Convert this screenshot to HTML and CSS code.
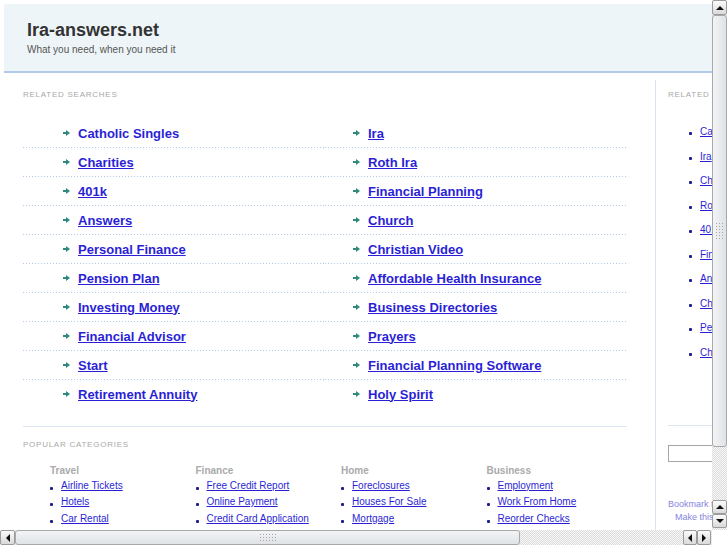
FILE: index.html
```html
<!DOCTYPE html>
<html lang="en">

<head>
    <meta charset="UTF-8">
    <meta name="viewport" content="width=device-width, initial-scale=1.0">
    <title>Ira-answers.net</title>
    <link rel="stylesheet" href="styles.css">
</head>

<body>

    <div class="page">
        <div class="header">
            <h1 class="site-name">Ira-answers.net</h1>
            <p class="tagline">What you need, when you need it</p>
        </div>

        <div class="main">
            <div class="content">
                <h3 class="section-title">Related Searches</h3>
                <div class="searches">
                    <ul class="search-list left">
                        <li><span class="arrow"></span><a href="#" class="hover">Catholic Singles</a></li>
                        <li><span class="arrow"></span><a href="#">Charities</a></li>
                        <li><span class="arrow"></span><a href="#">401k</a></li>
                        <li><span class="arrow"></span><a href="#">Answers</a></li>
                        <li><span class="arrow"></span><a href="#">Personal Finance</a></li>
                        <li><span class="arrow"></span><a href="#">Pension Plan</a></li>
                        <li><span class="arrow"></span><a href="#">Investing Money</a></li>
                        <li><span class="arrow"></span><a href="#">Financial Advisor</a></li>
                        <li><span class="arrow"></span><a href="#">Start</a></li>
                        <li><span class="arrow"></span><a href="#">Retirement Annuity</a></li>
                    </ul>
                    <ul class="search-list right">
                        <li><span class="arrow"></span><a href="#">Ira</a></li>
                        <li><span class="arrow"></span><a href="#">Roth Ira</a></li>
                        <li><span class="arrow"></span><a href="#">Financial Planning</a></li>
                        <li><span class="arrow"></span><a href="#">Church</a></li>
                        <li><span class="arrow"></span><a href="#">Christian Video</a></li>
                        <li><span class="arrow"></span><a href="#">Affordable Health Insurance</a></li>
                        <li><span class="arrow"></span><a href="#">Business Directories</a></li>
                        <li><span class="arrow"></span><a href="#">Prayers</a></li>
                        <li><span class="arrow"></span><a href="#">Financial Planning Software</a></li>
                        <li><span class="arrow"></span><a href="#">Holy Spirit</a></li>
                    </ul>
                </div>

                <div class="popular">
                    <h3 class="section-title">Popular Categories</h3>
                    <div class="categories">
                        <div class="category">
                            <h4>Travel</h4>
                            <ul>
                                <li><a href="#">Airline Tickets</a></li>
                                <li><a href="#">Hotels</a></li>
                                <li><a href="#">Car Rental</a></li>
                            </ul>
                        </div>
                        <div class="category">
                            <h4>Finance</h4>
                            <ul>
                                <li><a href="#">Free Credit Report</a></li>
                                <li><a href="#">Online Payment</a></li>
                                <li><a href="#">Credit Card Application</a></li>
                            </ul>
                        </div>
                        <div class="category">
                            <h4>Home</h4>
                            <ul>
                                <li><a href="#">Foreclosures</a></li>
                                <li><a href="#">Houses For Sale</a></li>
                                <li><a href="#">Mortgage</a></li>
                            </ul>
                        </div>
                        <div class="category">
                            <h4>Business</h4>
                            <ul>
                                <li><a href="#">Employment</a></li>
                                <li><a href="#">Work From Home</a></li>
                                <li><a href="#">Reorder Checks</a></li>
                            </ul>
                        </div>
                    </div>
                </div>
            </div>

            <div class="sidebar">
                <h3 class="section-title">Related Searches</h3>
                <ul class="side-list">
                    <li><a href="#">Catholic Singles</a></li>
                    <li><a href="#">Ira</a></li>
                    <li><a href="#">Charities</a></li>
                    <li><a href="#">Roth Ira</a></li>
                    <li><a href="#">401k</a></li>
                    <li><a href="#">Financial Planning</a></li>
                    <li><a href="#">Answers</a></li>
                    <li><a href="#">Church</a></li>
                    <li><a href="#">Personal Finance</a></li>
                    <li><a href="#">Christian Video</a></li>
                </ul>
                <div class="side-search">
                    <input type="text" class="search-box">
                </div>
                <p class="bookmark">Bookmark this page</p>
                <p class="bookmark indent">Make this your homepage</p>
            </div>
        </div>
    </div>

    <div class="vscroll">
        <div class="sb-btn up first"></div>
        <div class="sb-thumb vertical"><span class="grip"></span></div>
        <div class="sb-track"></div>
        <div class="sb-btn up"></div>
        <div class="sb-btn down"></div>
    </div>

    <div class="hscroll">
        <div class="sb-btn left first"></div>
        <div class="sb-thumb horizontal"><span class="grip"></span></div>
        <div class="sb-track"></div>
        <div class="sb-btn left"></div>
        <div class="sb-btn right"></div>
    </div>

    <div class="sb-corner"></div>

</body>

</html>
```

FILE: styles.css
```css
html,
body {
    margin: 0;
    padding: 0;
    height: 100%;
    overflow: hidden;
}

body {
    font-family: "Liberation Sans", Arial, Helvetica, sans-serif;
    color: #333;
    background-color: #fff;
}

a {
    color: #2b1fd6;
}

.page {
    width: 956px;
    padding: 4px 0 0 4px;
}

.header {
    background-color: #eef5f8;
    border-bottom: 2px solid #b3c9e9;
    padding: 15px 23px;
}

.site-name {
    margin: 0;
    font-size: 18px;
    line-height: 22px;
    font-weight: bold;
    color: #333;
}

.tagline {
    margin: 3px 0 0;
    font-size: 10px;
    line-height: 12px;
    color: #555;
}

.main {
    display: flex;
    align-items: flex-start;
}

.content {
    flex: none;
    width: 604px;
    padding: 17px 28px 0 19px;
}

.section-title {
    margin: 0;
    font-size: 8px;
    line-height: 10px;
    font-weight: normal;
    letter-spacing: 0.75px;
    text-transform: uppercase;
    color: #a8a8a8;
    white-space: nowrap;
}

/* related searches */

.searches {
    display: grid;
    grid-template-columns: 1fr 1fr;
    margin-top: 19px;
}

.search-list {
    list-style: none;
    margin: 0;
    padding: 0;
}

.search-list li {
    display: flex;
    align-items: center;
    height: 28px;
    padding-bottom: 1px;
    font-size: 13px;
    font-weight: bold;
    background: linear-gradient(to right, #b6cbea 1px, transparent 1px) left bottom / 3px 1px repeat-x;
}

.search-list li:last-child {
    background: none;
}

.search-list.left li {
    padding-left: 40px;
}

.search-list.right li {
    padding-left: 28px;
}

.search-list a.hover {
    text-decoration: none;
}

.arrow {
    position: relative;
    flex: none;
    width: 7px;
    height: 6px;
    margin-right: 8px;
}

.arrow::before {
    content: "";
    position: absolute;
    left: 0;
    top: 2px;
    width: 4px;
    height: 2px;
    background-color: #2f8a7e;
}

.arrow::after {
    content: "";
    position: absolute;
    left: 3px;
    top: 0;
    border-left: 4px solid #2f8a7e;
    border-top: 3px solid transparent;
    border-bottom: 3px solid transparent;
}

/* popular categories */

.popular {
    margin-top: 17px;
    border-top: 1px solid #dde7f3;
    padding-top: 13px;
}

.categories {
    display: grid;
    grid-template-columns: repeat(4, 145.5px);
    padding-left: 27px;
    margin-top: 13.5px;
}

.category h4 {
    margin: 0;
    font-size: 10px;
    line-height: 14px;
    font-weight: bold;
    color: #aaa;
}

.category ul,
.side-list {
    list-style: none;
    margin: 0;
    padding: 0;
}

.category li {
    position: relative;
    padding-left: 11px;
    font-size: 10px;
    line-height: 16.5px;
    white-space: nowrap;
}

.category li::before,
.side-list li::before {
    content: "";
    position: absolute;
    left: 0;
    top: 9px;
    width: 3px;
    height: 3px;
    border-radius: 1px;
    background-color: #1d1d8c;
}

/* sidebar */

.sidebar {
    flex: none;
    width: 280px;
    min-height: 480px;
    margin-top: 7px;
    padding: 10px 0 0 12px;
    border-left: 1px solid #d9e3f2;
}

.side-list {
    margin-top: 20px;
    padding-left: 21px;
}

.side-list li {
    position: relative;
    padding-left: 11px;
    font-size: 10px;
    line-height: 24.5px;
    white-space: nowrap;
}

.side-list li::before {
    top: 12px;
}

.side-search {
    margin-top: 60px;
    border-top: 1px solid #dde7f3;
    padding-top: 19px;
}

.search-box {
    display: block;
    box-sizing: border-box;
    width: 200px;
    height: 17px;
    margin: 0;
    border: 1px solid #a5a5a5;
    padding: 0 3px;
}

.bookmark {
    margin: 0;
    font-size: 9px;
    line-height: 13px;
    color: #8585dd;
    white-space: nowrap;
}

.side-search + .bookmark {
    margin-top: 36px;
}

.bookmark.indent {
    padding-left: 7px;
}

/* window scrollbars */

.vscroll,
.hscroll {
    position: fixed;
    display: flex;
    background: repeating-conic-gradient(#dcdcdc 0 25%, #f7f7f7 0 50%) 0 0 / 2px 2px;
}

.vscroll {
    top: 0;
    right: 0;
    width: 15px;
    height: 530px;
    flex-direction: column;
}

.hscroll {
    left: 0;
    bottom: 0;
    width: 712px;
    height: 15px;
}

.sb-corner {
    position: fixed;
    right: 0;
    bottom: 0;
    width: 15px;
    height: 15px;
    background-color: #fff;
}

.sb-track {
    flex: 1;
}

.sb-btn {
    flex: none;
    box-sizing: border-box;
    display: flex;
    align-items: center;
    justify-content: center;
    border: 1px solid #9c9c9c;
    border-radius: 2px;
    background: linear-gradient(#fbfbfb, #dadada);
}

.vscroll .sb-btn {
    width: 15px;
    height: 14px;
}

.vscroll .sb-btn.first {
    height: 15px;
}

.vscroll .sb-btn:last-child {
    margin-bottom: 2px;
}

.hscroll .sb-btn {
    width: 14px;
    height: 15px;
}

.hscroll .sb-btn.first {
    width: 15px;
}

.hscroll .sb-btn:last-child {
    margin-right: 1px;
}

.sb-btn::before {
    content: "";
    width: 0;
    height: 0;
}

.sb-btn.up::before {
    border-bottom: 4px solid #111;
    border-left: 4px solid transparent;
    border-right: 4px solid transparent;
}

.sb-btn.down::before {
    border-top: 4px solid #111;
    border-left: 4px solid transparent;
    border-right: 4px solid transparent;
}

.sb-btn.left::before {
    border-right: 4px solid #111;
    border-top: 4px solid transparent;
    border-bottom: 4px solid transparent;
}

.sb-btn.right::before {
    border-left: 4px solid #111;
    border-top: 4px solid transparent;
    border-bottom: 4px solid transparent;
}

.sb-thumb {
    flex: none;
    box-sizing: border-box;
    display: flex;
    align-items: center;
    justify-content: center;
    border: 1px solid #a8a8a8;
    border-radius: 3px;
}

.sb-thumb.vertical {
    height: 432px;
    background: linear-gradient(to right, #f3f4f6, #dfe2e6);
}

.sb-thumb.horizontal {
    width: 505px;
    background: linear-gradient(#f3f4f6, #dfe2e6);
}

.grip {
    background: radial-gradient(circle, #a6a6a6 0.7px, transparent 1px) 0 0 / 3px 3px;
}

.vertical .grip {
    width: 9px;
    height: 18px;
}

.horizontal .grip {
    width: 18px;
    height: 9px;
}
```
